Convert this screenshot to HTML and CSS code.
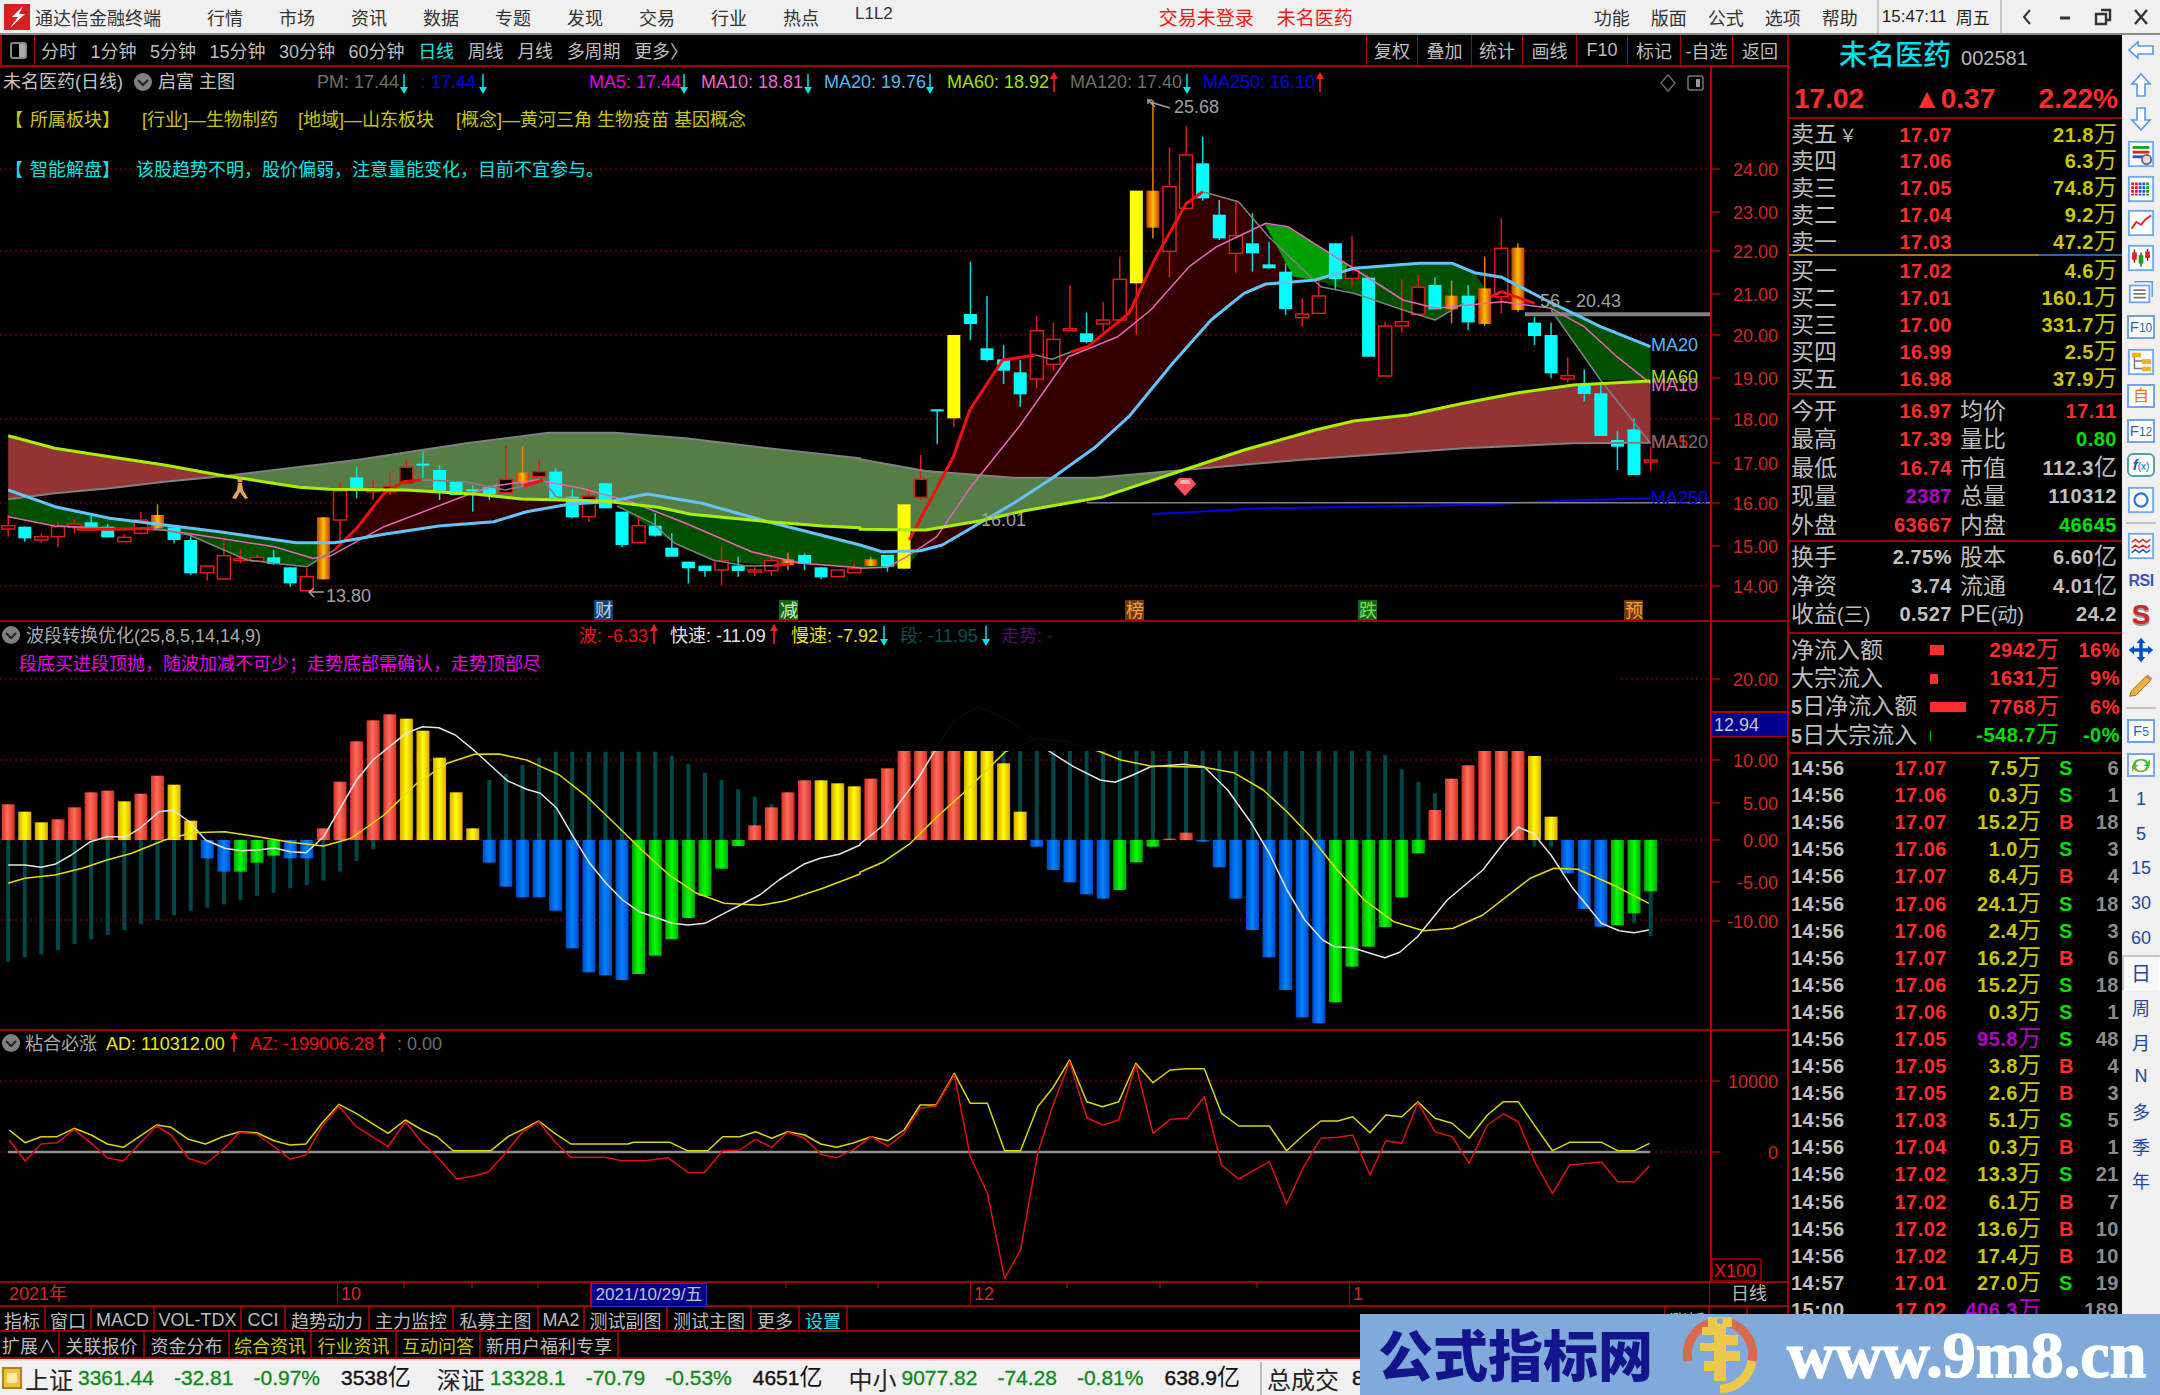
FILE: index.html
```html
<!DOCTYPE html>
<html lang="zh-CN">
<head>
<meta charset="utf-8">
<title>通达信金融终端</title>
<link rel="stylesheet" href="styles.css">
</head>
<body>
<div class="app">
  <header class="titlebar">
    <svg class="logo" viewBox="0 0 26 26"><rect width="26" height="26" fill="#d42020"/><path d="M19 2 L8 13 L14 13 L6 24 L21 10 L15 10 Z" fill="#fff"/></svg>
    <span class="brand">通达信金融终端</span>
    <nav class="menu"><span>行情</span><span>市场</span><span>资讯</span><span>数据</span><span>专题</span><span>发现</span><span>交易</span><span>行业</span><span>热点</span><span class="l12">L1L2</span></nav>
    <div class="notice"><span>交易未登录</span><span>未名医药</span></div>
    <nav class="menu2"><span>功能</span><span>版面</span><span>公式</span><span>选项</span><span>帮助</span></nav>
    <div class="clock"><span>15:47:11</span><span>周五</span></div>
    <div class="winbtns">
      <svg viewBox="0 0 20 20"><path d="M13 3 L7 10 L13 17" fill="none" stroke="#333" stroke-width="2"/></svg>
      <svg viewBox="0 0 20 20"><path d="M5 11 H15" stroke="#333" stroke-width="3"/></svg>
      <svg viewBox="0 0 20 20"><path d="M8 3 H17 V13 H14 M3 7 H13 V17 H3 Z" fill="none" stroke="#333" stroke-width="2.4"/></svg>
      <svg viewBox="0 0 20 20"><path d="M4 3 L16 17 M16 3 L4 17" stroke="#333" stroke-width="2.4"/></svg>
    </div>
  </header>

  <div class="work">
    <div class="left">
      <div class="toolbar">
        <span class="tb-icon"><i></i></span>
        <div class="periods"><span>分时</span><span>1分钟</span><span>5分钟</span><span>15分钟</span><span>30分钟</span><span>60分钟</span><span class="on">日线</span><span>周线</span><span>月线</span><span>多周期</span><span>更多〉</span></div>
        <div class="tb-right"><span>复权</span><span>叠加</span><span>统计</span><span>画线</span><span>F10</span><span>标记</span><span>-自选</span><span>返回</span></div>
      </div>

      <section class="panel">
        <svg class="chart main" viewBox="0 67 1787 553" xmlns="http://www.w3.org/2000/svg">
          <defs>
            <linearGradient id="gOrange"><stop offset="0" stop-color="#c83c00"/><stop offset=".5" stop-color="#ffc000"/><stop offset="1" stop-color="#c83c00"/></linearGradient>
            <linearGradient id="gRed"><stop offset="0" stop-color="#d83020"/><stop offset=".45" stop-color="#ff6e5e"/><stop offset="1" stop-color="#d83020"/></linearGradient>
            <linearGradient id="gYellow"><stop offset="0" stop-color="#dca800"/><stop offset=".5" stop-color="#ffff00"/><stop offset="1" stop-color="#dca800"/></linearGradient>
            <linearGradient id="gBlue"><stop offset="0" stop-color="#0048c8"/><stop offset=".5" stop-color="#0084ff"/><stop offset="1" stop-color="#0048c8"/></linearGradient>
            <linearGradient id="gGreen"><stop offset="0" stop-color="#00a800"/><stop offset=".5" stop-color="#00ff00"/><stop offset="1" stop-color="#00a800"/></linearGradient>
          </defs>
          <g id="mainGrid"></g>
          <g id="mainFill"></g>
          <g id="mainCandles"></g>
          <g id="mainLines"></g>
          <text class="t gray" x="3" y="88">未名医药(日线)</text>
          <circle class="hdot" cx="143" cy="82" r="9"/><path class="hchev" d="M138 80 L143 85 L148 80"/>
          <text class="t gray" x="158" y="88">启富 主图</text>
          <text class="n dim" x="317" y="88">PM: 17.44</text>
          <text class="n c-blue" x="421" y="88">: 17.44</text>
          <text class="n c-mag" x="589" y="88">MA5: 17.44</text>
          <text class="n c-pink" x="701" y="88">MA10: 18.81</text>
          <text class="n c-sky" x="824" y="88">MA20: 19.76</text>
          <text class="n c-lime" x="947" y="88">MA60: 18.92</text>
          <text class="n dim" x="1070" y="88">MA120: 17.40</text>
          <text class="n c-blue" x="1203" y="88">MA250: 16.10</text>
          <path class="diamond" d="M1668 75 L1675 83 L1668 91 L1661 83 Z"/>
          <rect class="mini" x="1688" y="76" width="15" height="14" rx="2"/><rect class="mini-in" x="1696" y="79" width="4" height="8"/>
          <text class="t c-olive" x="5" y="126">【<tspan dx="7">所属板块</tspan>】</text>
          <text class="t c-olive" x="142" y="126">[行业]—生物制药</text>
          <text class="t c-olive" x="298" y="126">[地域]—山东板块</text>
          <text class="t c-olive" x="456" y="126">[概念]—黄河三角 生物疫苗 基因概念</text>
          <text class="t c-cyan" x="5" y="176">【<tspan dx="7">智能解盘</tspan>】</text>
          <text class="t c-cyan" x="136" y="176">该股趋势不明，股价偏弱，注意量能变化，目前不宜参与。</text>
          <text class="n dim2" x="1174" y="113">25.68</text>
          <text class="n dim2" x="326" y="602">13.80</text>
          <path class="arrowm" d="M1155 107 L1148 100 L1148 104 M1148 100 L1152 100 M1150 102 L1170 108"/>
          <path class="arrowm" d="M324 592 H309 M314 588 L309 592 L314 597"/>
          <text class="n dim2" x="981" y="526">16.01</text>
          <text class="n dim2" x="1540" y="307">56 - 20.43</text>
          <text class="n c-sky" x="1651" y="351">MA20</text>
          <text class="n c-pink" x="1651" y="391">MA10</text>
          <text class="n c-lime" x="1651" y="383">MA60</text>
          <text class="n c-red" x="1651" y="448">MA5</text>
          <text class="n dim" x="1651" y="448">MA120</text>
          <text class="n c-blue" x="1651" y="504">MA250</text>
          <g id="mainMarks"></g>
          <g class="badge"><rect class="b-navy" x="594" y="600" width="19" height="21"/><text class="t b-navyt" x="595" y="617">财</text></g>
          <g class="badge"><rect class="b-green" x="779" y="600" width="19" height="21"/><text class="t b-greent" x="780" y="617">减</text></g>
          <g class="badge"><rect class="b-orange" x="1125" y="600" width="19" height="21"/><text class="t b-oranget" x="1126" y="617">榜</text></g>
          <g class="badge"><rect class="b-green" x="1358" y="600" width="19" height="21"/><text class="t b-greent2" x="1359" y="617">跌</text></g>
          <g class="badge"><rect class="b-orange" x="1624" y="600" width="19" height="21"/><text class="t b-oranget" x="1625" y="617">预</text></g>
          <g id="mainAxis"></g>
        </svg>
      </section>

      <section class="panel">
        <svg class="chart ind1" viewBox="0 622 1787 407" xmlns="http://www.w3.org/2000/svg">
          <g id="ind1Grid"></g>
          <g id="ind1Bars"></g>
          <g id="ind1Lines"></g>
          <rect class="mask" x="540" y="624" width="1081" height="127"/>
          <circle class="hdot" cx="11" cy="635" r="9"/><path class="hchev" d="M6 633 L11 638 L16 633"/>
          <text class="t gray2" x="26" y="642">波段转换优化(25,8,5,14,14,9)</text>
          <text class="t c-red" x="579" y="642">波: -6.33</text>
          <text class="t c-white" x="670" y="642">快速: -11.09</text>
          <text class="t c-yellow" x="791" y="642">慢速: -7.92</text>
          <text class="t c-teal" x="900" y="642">段: -11.95</text>
          <text class="t c-purple" x="1001" y="642">走势: -</text>
          <text class="t c-mag" x="19" y="670">段底买进段顶抛，随波加减不可少；走势底部需确认，走势顶部尽</text>
          <g id="ind1Axis"></g>
          <rect class="valbox" x="1712" y="713" width="75" height="23"/>
          <text class="n valtext" x="1714" y="731">12.94</text>
        </svg>
      </section>

      <section class="panel">
        <svg class="chart ind2" viewBox="0 1031 1787 250" xmlns="http://www.w3.org/2000/svg">
          <g id="ind2Grid"></g>
          <g id="ind2Lines"></g>
          <circle class="hdot" cx="11" cy="1043" r="9"/><path class="hchev" d="M6 1041 L11 1046 L16 1041"/>
          <text class="t gray2" x="25" y="1050">粘合必涨</text>
          <text class="n c-yellow" x="106" y="1050">AD: 110312.00</text>
          <text class="n c-red" x="250" y="1050">AZ: -199006.28</text>
          <text class="n dim" x="397" y="1050">: 0.00</text>
          <g id="ind2Axis"></g>
          <rect class="xbox" x="1712" y="1259" width="49" height="22"/>
          <text class="n c-red" x="1714" y="1277">X100</text>
        </svg>
      </section>

      <div class="datebar">
        <span>2021年</span><span>10</span><span class="cur">2021/10/29/五</span><span></span><span>12</span><span>1</span><span class="dl">日线</span>
        <svg class="dateticks" viewBox="0 0 1787 6"><path d="M404 0V5 M472 0V5 M538 0V5 M786 0V5 M878 0V5 M1067 0V5 M1160 0V5 M1257 0V5"/></svg>
      </div>
      <div class="tabs tabs-a"><span>指标</span><span>窗口</span><span>MACD</span><span>VOL-TDX</span><span>CCI</span><span>趋势动力</span><span>主力监控</span><span>私募主图</span><span>MA2</span><span>测试副图</span><span>测试主图</span><span>更多</span><span class="on">设置</span><span class="fill"></span><span>涨板</span><span>.</span></div>
      <div class="tabs tabs-b"><span>扩展∧</span><span>关联报价</span><span>资金分布</span><span class="hl">综合资讯</span><span class="hl">行业资讯</span><span class="hl">互动问答</span><span>新用户福利专享</span></div>
    </div>

    <aside class="quote">
      <div class="q-head">
        <div class="q-name"><b>未名医药</b><span>002581</span></div>
        <div class="q-price"><span>17.02</span><span>▲0.37</span><span>2.22%</span></div>
      </div>
      <div class="book sell">
        <div><span class="lab">卖五<small>￥</small></span><span class="pr">17.07</span><span class="vo">21.8<i>万</i></span></div>
        <div><span class="lab">卖四</span><span class="pr">17.06</span><span class="vo">6.3<i>万</i></span></div>
        <div><span class="lab">卖三</span><span class="pr">17.05</span><span class="vo">74.8<i>万</i></span></div>
        <div><span class="lab">卖二</span><span class="pr">17.04</span><span class="vo">9.2<i>万</i></span></div>
        <div><span class="lab">卖一</span><span class="pr">17.03</span><span class="vo">47.2<i>万</i></span></div>
      </div>
      <div class="book buy">
        <div><span class="lab">买一</span><span class="pr">17.02</span><span class="vo">4.6<i>万</i></span></div>
        <div><span class="lab">买二</span><span class="pr">17.01</span><span class="vo">160.1<i>万</i></span></div>
        <div><span class="lab">买三</span><span class="pr">17.00</span><span class="vo">331.7<i>万</i></span></div>
        <div><span class="lab">买四</span><span class="pr">16.99</span><span class="vo">2.5<i>万</i></span></div>
        <div><span class="lab">买五</span><span class="pr">16.98</span><span class="vo">37.9<i>万</i></span></div>
      </div>
      <div class="stats s5">
        <span class="lab">今开</span><span class="pr">16.97</span><span class="lab">均价</span><span class="pr">17.11</span>
        <span class="lab">最高</span><span class="pr">17.39</span><span class="lab">量比</span><span class="gr">0.80</span>
        <span class="lab">最低</span><span class="pr">16.74</span><span class="lab">市值</span><span class="wh">112.3<i>亿</i></span>
        <span class="lab">现量</span><span class="pu">2387</span><span class="lab">总量</span><span class="wh">110312</span>
        <span class="lab">外盘</span><span class="pr">63667</span><span class="lab">内盘</span><span class="gr">46645</span>
      </div>
      <div class="stats s3">
        <span class="lab">换手</span><span class="wh">2.75%</span><span class="lab">股本</span><span class="wh">6.60<i>亿</i></span>
        <span class="lab">净资</span><span class="wh">3.74</span><span class="lab">流通</span><span class="wh">4.01<i>亿</i></span>
        <span class="lab">收益<em>(三)</em></span><span class="wh">0.527</span><span class="lab">PE<em>(动)</em></span><span class="wh">24.2</span>
      </div>
      <div class="flow">
        <span class="lab">净流入额</span><span class="bar"><u class="b14"></u></span><span class="pr">2942<i>万</i></span><span class="pr">16%</span>
        <span class="lab">大宗流入</span><span class="bar"><u class="b8"></u></span><span class="pr">1631<i>万</i></span><span class="pr">9%</span>
        <span class="lab"><b>5</b>日净流入额</span><span class="bar"><u class="b36"></u></span><span class="pr">7768<i>万</i></span><span class="pr">6%</span>
        <span class="lab"><b>5</b>日大宗流入</span><span class="bar"><u class="bg"></u></span><span class="gr">-548.7<i>万</i></span><span class="gr">-0%</span>
      </div>
      <div class="ticks">
        <div><span>14:56</span><span>17.07</span><span>7.5<i>万</i></span><span class="s">S</span><span>6</span></div>
        <div><span>14:56</span><span>17.06</span><span>0.3<i>万</i></span><span class="s">S</span><span>1</span></div>
        <div><span>14:56</span><span>17.07</span><span>15.2<i>万</i></span><span class="b">B</span><span>18</span></div>
        <div><span>14:56</span><span>17.06</span><span>1.0<i>万</i></span><span class="s">S</span><span>3</span></div>
        <div><span>14:56</span><span>17.07</span><span>8.4<i>万</i></span><span class="b">B</span><span>4</span></div>
        <div><span>14:56</span><span>17.06</span><span>24.1<i>万</i></span><span class="s">S</span><span>18</span></div>
        <div><span>14:56</span><span>17.06</span><span>2.4<i>万</i></span><span class="s">S</span><span>3</span></div>
        <div><span>14:56</span><span>17.07</span><span>16.2<i>万</i></span><span class="b">B</span><span>6</span></div>
        <div><span>14:56</span><span>17.06</span><span>15.2<i>万</i></span><span class="s">S</span><span>18</span></div>
        <div><span>14:56</span><span>17.06</span><span>0.3<i>万</i></span><span class="s">S</span><span>1</span></div>
        <div><span>14:56</span><span>17.05</span><span class="big">95.8<i>万</i></span><span class="s">S</span><span>48</span></div>
        <div><span>14:56</span><span>17.05</span><span>3.8<i>万</i></span><span class="b">B</span><span>4</span></div>
        <div><span>14:56</span><span>17.05</span><span>2.6<i>万</i></span><span class="b">B</span><span>3</span></div>
        <div><span>14:56</span><span>17.03</span><span>5.1<i>万</i></span><span class="s">S</span><span>5</span></div>
        <div><span>14:56</span><span>17.04</span><span>0.3<i>万</i></span><span class="b">B</span><span>1</span></div>
        <div><span>14:56</span><span>17.02</span><span>13.3<i>万</i></span><span class="s">S</span><span>21</span></div>
        <div><span>14:56</span><span>17.02</span><span>6.1<i>万</i></span><span class="b">B</span><span>7</span></div>
        <div><span>14:56</span><span>17.02</span><span>13.6<i>万</i></span><span class="b">B</span><span>10</span></div>
        <div><span>14:56</span><span>17.02</span><span>17.4<i>万</i></span><span class="b">B</span><span>10</span></div>
        <div><span>14:57</span><span>17.01</span><span>27.0<i>万</i></span><span class="s">S</span><span>19</span></div>
        <div><span>15:00</span><span>17.02</span><span class="big">406.3<i>万</i></span><span></span><span>189</span></div>
      </div>
    </aside>

    <nav class="side">
      <span class="si first"><svg viewBox="0 0 30 24"><path class="ic" d="M3 12 L12 4 V8 H27 V16 H12 V20 Z"/></svg></span>
      <span class="si"><svg viewBox="0 0 30 28"><path class="ic" d="M15 3 L24 13 H19 V25 H11 V13 H6 Z"/></svg></span>
      <span class="si"><svg viewBox="0 0 30 28"><path class="ic" d="M15 25 L24 15 H19 V3 H11 V15 H6 Z"/></svg></span>
      <span class="si"><svg viewBox="0 0 30 30"><rect class="bx" x="2" y="2" width="26" height="26"/><path d="M6 8H24" stroke="#18a018" stroke-width="3"/><path d="M6 13H24" stroke="#e02020" stroke-width="3"/><path d="M6 18H18" stroke="#2050d0" stroke-width="3"/><circle cx="21" cy="21" r="5" fill="#ddd" stroke="#666" stroke-width="2"/></svg></span>
      <span class="si"><svg viewBox="0 0 30 30"><rect class="bx" x="2" y="2" width="26" height="26"/><path d="M6 8V22M10 8V22" stroke="#e02020" stroke-width="3" stroke-dasharray="3 1"/><path d="M14 8V22M18 8V22" stroke="#2050d0" stroke-width="3" stroke-dasharray="3 1"/><path d="M22 8V22" stroke="#18a018" stroke-width="3" stroke-dasharray="3 1"/></svg></span>
      <span class="si"><svg viewBox="0 0 30 30"><rect class="bx" x="2" y="2" width="26" height="26"/><path d="M5 21 L10 14 L15 17 L20 11 L26 7" fill="none" stroke="#e02020" stroke-width="2"/></svg></span>
      <span class="si"><svg viewBox="0 0 30 30"><rect class="bx" x="2" y="2" width="26" height="26"/><path d="M8 6V20M15 9V24M22 5V18" stroke="#333" stroke-width="1.5"/><path d="M8 9V17M22 8V15" stroke="#e02020" stroke-width="5"/><path d="M15 12V21" stroke="#18a018" stroke-width="5"/></svg></span>
      <span class="si"><svg viewBox="0 0 30 30"><path class="ic" d="M8 4H27V20"/><rect class="bx" x="3" y="8" width="21" height="18"/><path d="M7 13H20M7 17H20M7 21H20" stroke="#777" stroke-width="2"/></svg></span>
      <span class="si"><span class="ft">F<small>10</small></span></span>
      <span class="si"><svg viewBox="0 0 30 30"><rect class="bx" x="2" y="2" width="26" height="26"/><path d="M8 8V22H17M8 14H17" fill="none" stroke="#777" stroke-width="1.5"/><rect x="5" y="5" width="10" height="5" fill="#f0b020"/><rect x="16" y="12" width="10" height="5" fill="#f0b020"/><rect x="16" y="20" width="10" height="5" fill="#f0b020"/></svg></span>
      <span class="si"><span class="ft zi">自</span></span>
      <span class="si"><span class="ft">F<small>12</small></span></span>
      <span class="si"><span class="ft fx"><em>f</em><small>(x)</small></span></span>
      <span class="si"><svg viewBox="0 0 30 30"><rect class="bx" x="2" y="2" width="26" height="26"/><circle cx="15" cy="15" r="7" fill="none" stroke="#2f78d8" stroke-width="2.4"/></svg></span>
      <span class="sep"></span>
      <span class="si"><svg viewBox="0 0 30 30"><rect class="bx" x="2" y="2" width="26" height="26"/><path d="M5 11 L9 8 L13 11 L17 8 L21 11 L25 8" fill="none" stroke="#e02020" stroke-width="1.6"/><path d="M5 17 L9 14 L13 17 L17 14 L21 17 L25 14" fill="none" stroke="#e02020" stroke-width="1.6"/><path d="M5 22 L9 19 L13 22 L17 19 L21 22 L25 19" fill="none" stroke="#2050d0" stroke-width="1.6"/></svg></span>
      <span class="si"><span class="rsi">RSI</span></span>
      <span class="si"><span class="dol">S</span></span>
      <span class="si"><svg viewBox="0 0 32 32"><path d="M16 2 L21 8 H18 V14 H24 V11 L30 16 L24 21 V18 H18 V24 H21 L16 30 L11 24 H14 V18 H8 V21 L2 16 L8 11 V14 H14 V8 H11 Z" fill="#0050c8"/></svg></span>
      <span class="si"><svg viewBox="0 0 32 32"><path d="M5 24 L22 7 L27 12 L10 29 L3 30 Z" fill="#f0b040" stroke="#806020"/><path d="M22 7 L24 5 L29 10 L27 12 Z" fill="#e08080"/></svg></span>
      <span class="sep"></span>
      <span class="si"><span class="ft">F<small>5</small></span></span>
      <span class="si"><svg viewBox="0 0 30 26"><rect class="bx" x="2" y="2" width="26" height="22"/><path d="M7 13 A8 6 0 0 1 22 10 L24 7 V14 H17 L20 12 A5 4 0 0 0 10 13 Z" fill="#40c040"/><path d="M23 14 A8 6 0 0 1 8 17 L6 20 V13 H13 L10 15 A5 4 0 0 0 20 14 Z" fill="#70b040"/></svg></span>
      <span class="si tx">1</span><span class="si tx">5</span><span class="si tx">15</span><span class="si tx">30</span><span class="si tx">60</span>
      <span class="si tx sel">日</span><span class="si tx">周</span><span class="si tx">月</span><span class="si tx">N</span><span class="si tx">多</span><span class="si tx">季</span><span class="si tx">年</span>
    </nav>
  </div>

  <footer class="status">
    <span class="st-icon"><i></i></span>
    <span class="st-l">上证</span><span class="st-n lead">3361.44</span><span class="st-n">-32.81</span><span class="st-n">-0.97%</span><span class="st-a">3538<i>亿</i></span>
    <span class="st-l wide">深证</span><span class="st-n lead">13328.1</span><span class="st-n">-70.79</span><span class="st-n">-0.53%</span><span class="st-a">4651<i>亿</i></span>
    <span class="st-l wide">中小</span><span class="st-n lead">9077.82</span><span class="st-n">-74.28</span><span class="st-n">-0.81%</span><span class="st-a">638.9<i>亿</i></span>
    <span class="st-sep"></span><span class="st-l tight">总成交</span><span class="st-a near">8</span>
  </footer>

  <div class="watermark">
    <span class="wm-cn">公式指标网</span>
    <svg class="wm-logo" viewBox="0 0 80 80"><path d="M8 46 A33 33 0 0 1 30 8" fill="none" stroke="#d9694f" stroke-width="9"/><path d="M50 8 A33 33 0 0 1 72 46" fill="none" stroke="#d9694f" stroke-width="9"/><path d="M72 46 A33 33 0 0 1 40 74" fill="none" stroke="#ecc94b" stroke-width="9"/><path d="M28 2 H52 V12 H46 V20 H58 V30 H46 V36 H60 V46 H46 V66 H34 V56 H24 V46 H34 V36 H20 V28 H34 V20 H22 V12 H28 Z" fill="#ecc94b"/><circle cx="40" cy="6" r="3" fill="#7fa9d8"/></svg>
    <span class="wm-url">www.9m8.cn</span>
  </div>
</div>
<script src="chart.js"></script>
</body>
</html>
```

FILE: styles.css
```css
* { box-sizing: border-box; }
html, body { margin: 0; padding: 0; background: #000; }
body { font-family: "Liberation Sans", "Noto Sans CJK SC", sans-serif; }
.app { width: 2160px; height: 1395px; position: relative; overflow: hidden; display: flex; flex-direction: column; }

/* title bar */
.titlebar { height: 35px; flex: none; background: #f0f0f0; border-bottom: 2px solid #8c8c8c; display: flex; align-items: center; font-size: 18px; color: #222; white-space: nowrap; }
.logo { width: 26px; height: 26px; margin-left: 4px; flex: none; }
.brand { margin-left: 5px; width: 126px; flex: none; letter-spacing: 0; color: #333; }
.menu { display: flex; gap: 36px; margin-left: 46px; color: #333; }
.l12 { font-size: 17px; }
.notice { display: flex; gap: 23px; margin-left: 266px; color: #f01818; font-size: 19px; width: 330px; }
.menu2 { display: flex; gap: 21px; margin-left: 105px; color: #333; }
.clock { display: flex; gap: 9px; margin-left: 19px; height: 33px; align-items: center; width: 125px; flex: none; border-left: 2px solid #c8c8c8; border-right: 2px solid #c8c8c8; padding: 0 3px; font-size: 17px; }
.winbtns { display: flex; gap: 18px; margin-left: 15px; }
.winbtns svg { width: 20px; height: 20px; display: block; }

/* layout */
.work { height: 1324px; flex: none; display: flex; }
.left { width: 1787px; flex: none; display: flex; flex-direction: column; background: #000; }

/* toolbar */
.toolbar { height: 32px; flex: none; border-bottom: 2px solid #a80000; display: flex; align-items: center; color: #bdbdbd; font-size: 18px; }
.tb-icon { width: 35px; height: 30px; flex: none; border-right: 1px solid #a80000; border-left: 2px solid #a80000; display: flex; align-items: center; justify-content: center; }
.tb-icon i { width: 17px; height: 17px; border: 2px solid #888; border-radius: 3px; display: block; background: linear-gradient(90deg, #000 55%, #aaa 55%); }
.periods { display: flex; gap: 13.5px; margin-left: 6px; }
.periods .on { color: #22e0e0; }
.tb-right { margin-left: auto; display: grid; grid-template-columns: 51px 54px 51px 54px 51px 53px 52px 55px; height: 30px; }
.tb-right span { border-left: 1px solid #a80000; display: flex; align-items: center; justify-content: center; }

/* chart panels */
.panel { flex: none; border-bottom: 2px solid #a00000; background: #000; }
.chart { display: block; width: 1787px; font-size: 18px; }
.chart.main { height: 553px; }
.chart.ind1 { height: 407px; }
.chart.ind2 { height: 250px; }
.t, .n { font-family: "Liberation Sans", "Noto Sans CJK SC", sans-serif; font-size: 18px; }
.gray { fill: #c4c4c4; }
.gray2 { fill: #a8a8a8; }
.dim { fill: #707070; }
.dim2 { fill: #a0a0a0; }
.c-blue { fill: #0000e8; }
.c-mag { fill: #e800e8; }
.c-pink { fill: #ee66cc; }
.c-sky { fill: #55b8f5; }
.c-lime { fill: #a0e000; }
.c-olive { fill: #c8c800; }
.c-cyan { fill: #00e8e8; }
.c-red { fill: #ee1010; }
.c-white { fill: #e0e0e0; }
.c-yellow { fill: #e8e800; }
.c-teal { fill: #0a5050; }
.c-purple { fill: #4a1060; }
.axis-t { fill: #d02828; font-family: "Liberation Sans", sans-serif; font-size: 18px; text-anchor: end; }
.hdot { fill: #808080; }
.hchev { fill: none; stroke: #222; stroke-width: 2; }
.diamond { fill: none; stroke: #666; stroke-width: 1.5; }
.mini { fill: #000; stroke: #777; stroke-width: 1.5; }
.mini-in { fill: #999; }
.arrowm { fill: none; stroke: #a0a0a0; stroke-width: 1.5; }
.grid { stroke: #a80000; stroke-width: 1; stroke-dasharray: 2 3; fill: none; }
.tickm { stroke: #a80000; stroke-width: 1.5; fill: none; }
.axisv { stroke: #b00000; stroke-width: 2; fill: none; }
.mask { fill: #000; opacity: .97; }
.valbox { fill: #000090; }
.valtext { fill: #c8c8c8; }
.xbox { fill: none; stroke: #a00000; stroke-width: 1.5; }
.b-navy { fill: #1d3f6e; } .b-navyt { fill: #b8d4f0; }
.b-green { fill: #146614; } .b-greent { fill: #d8f0c0; } .b-greent2 { fill: #7de060; }
.b-orange { fill: #6a3a10; } .b-oranget { fill: #ffa040; }

/* main chart shapes */
.f-ma-red { fill: #933333; }
.f-ma-green { fill: #567d46; }
.f-dred { fill: #330000; }
.f-dgreen { fill: #005000; }
.f-bgreen { fill: #00a000; }
.f-mred { fill: #660000; }
.wick { stroke-width: 1.5; fill: none; }
.wick.c { stroke: #00e0e0; }
.wick.r { stroke: #e81818; }
.wick.o { stroke: #e88000; }
.wick.y { stroke: #e81818; }
.body.c { fill: #00ffff; }
.body.r { fill: #000; stroke: #e81818; stroke-width: 1.5; }
.body.o { fill: url(#gOrange); }
.body.y { fill: #ffff00; }
.l { fill: none; stroke-linejoin: round; }
.l-60 { stroke: #a8f000; stroke-width: 3; }
.l-120 { stroke: #808080; stroke-width: 2; }
.l-20 { stroke: #62c4fa; stroke-width: 3; }
.l-10 { stroke: #e866b8; stroke-width: 1.5; }
.l-5r { stroke: #f01010; stroke-width: 3; }
.l-5g { stroke: #808080; stroke-width: 1.5; }
.l-250 { stroke: #0000f0; stroke-width: 2; }
.l-flat { stroke: #808080; stroke-width: 1.5; }
.l-res { stroke: #808080; stroke-width: 4; }
.l-white { stroke: #e4e4e4; stroke-width: 1.5; }
.l-yellow { stroke: #e0e000; stroke-width: 1.5; }
.l-ad { stroke: #d8d800; stroke-width: 1.5; }
.l-az { stroke: #e01010; stroke-width: 1.5; }
.l-zero { stroke: #909090; stroke-width: 2.5; }
.arr { fill: none; stroke-width: 1.5; }
.arr.cy { stroke: #00e8e8; }
.arr.rd { stroke: #ff2020; }
.arrh.cy { fill: #00e8e8; }
.arrh.rd { fill: #ff2020; }
.mk-body { fill: #e8a060; }
.mk-gem { fill: #ff5060; }
.mk-gem2 { fill: #ffb0b0; }
.teal { fill: #004848; }
.hb-r { fill: url(#gRed); }
.hb-y { fill: url(#gYellow); }
.hb-b { fill: url(#gBlue); }
.hb-g { fill: url(#gGreen); }

/* date bar + tabs */
.datebar { height: 24px; flex: none; border-bottom: 2px solid #a00000; position: relative; display: grid; grid-template-columns: 338px 253px 116px 264px 379px 360px 77px; color: #d02828; font-size: 18px; line-height: 22px; }
.datebar span { border-right: 1px solid #a00000; padding-left: 3px; white-space: nowrap; }
.datebar span:first-child { padding-left: 9px; }
.datebar .cur { background: #000090; color: #c4c4c4; padding: 0; border: 1px solid #3030b0; text-align: center; font-size: 17px; }
.datebar .dl { color: #bbb; border: 0; padding-left: 21px; }
.dateticks { position: absolute; left: 0; top: 0; width: 1787px; height: 6px; }
.dateticks path { stroke: #a00000; stroke-width: 1.5; fill: none; }
.tabs { flex: none; display: grid; border-bottom: 2px solid #a00000; color: #bdbdbd; font-size: 18px; }
.tabs span { border-right: 2px solid #8c0000; display: flex; align-items: center; justify-content: center; white-space: nowrap; }
.tabs-a { height: 25px; grid-template-columns: 46px 46px 63px 87px 44px 84px 84px 85px 46px 83px 84px 48px 48px 818px 44px 38px; }
.tabs-a .fill { border-right: 2px solid #8c0000; }
.tabs-a .on { color: #20e0e0; }
.tabs-b { height: 27px; grid-template-columns: 60px 85px 85px 82px 85px 84px 138px; }
.tabs-b .hl { color: #c8c800; }

/* quote */
.quote { width: 335px; flex: none; background: #000; border-left: 2px solid #a00000; overflow: hidden; color: #c0c0c0; line-height: 27px; font-family: "Liberation Sans", "Noto Sans CJK SC", sans-serif; }
.q-head { height: 84px; border-bottom: 2px solid #a00000; }
.q-name { height: 41px; display: flex; align-items: center; padding-left: 50px; gap: 10px; }
.q-name b { font-size: 28px; font-weight: 500; color: #00dff0; line-height: 40px; }
.q-name span { font-size: 20px; color: #b8b8b8; margin-top: 6px; }
.q-price { height: 41px; display: grid; grid-template-columns: 119px 123px 1fr; padding: 3px 4px 0 5px; font-weight: 700; font-size: 28px; color: #ff2c2c; align-items: center; }
.q-price span:last-child { text-align: right; }
.lab { font-size: 23px; color: #bdbdbd; white-space: nowrap; line-height: 27px; }
.lab small { font-size: 18px; margin-left: 2px; }
.lab em { font-style: normal; font-size: 20px; }
.lab b { font-size: 20px; }
.pr, .vo, .gr, .wh, .pu, .ticks span { font-size: 20px; font-weight: 700; letter-spacing: .5px; text-align: right; white-space: nowrap; line-height: 27px; }
i { font-style: normal; font-weight: 400; font-size: 23px; letter-spacing: 0; line-height: 1; }
.pr { color: #ff2c2c; }
.vo { color: #c8c800; }
.gr { color: #00e000; }
.wh { color: #c0c0c0; }
.pu { color: #b000c8; }
.book > div { display: grid; grid-template-columns: 60px 101px 165px; height: 27px; align-items: center; padding-left: 2px; }
.book .lab { white-space: nowrap; }
.sell { padding-top: 2px; height: 137px; border-bottom: 2px solid; border-image: linear-gradient(90deg, #a87820 0 75%, #2868a0 75%) 1; }
.buy { padding-top: 2px; height: 139px; border-bottom: 2px solid #a00000; }
.stats { display: grid; grid-template-columns: 60px 101px 68px 97px; grid-auto-rows: 28.5px; align-items: center; padding-left: 2px; padding-top: 2px; border-bottom: 2px solid #a00000; }
.stats > :nth-child(4n+3) { padding-left: 8px; }
.s5 { height: 146.5px; }
.s3 { height: 92.5px; }
.flow { height: 120px; display: grid; grid-template-columns: 139px 46px 83px 61px; grid-auto-rows: 28.5px; align-items: center; padding-left: 2px; padding-top: 2px; border-bottom: 2px solid #a00000; }
.bar { display: flex; align-items: center; height: 100%; }
.bar u { display: block; background: #ff2c2c; height: 10px; }
.bar .b14 { width: 14px; }
.bar .b8 { width: 8px; }
.bar .b36 { width: 36px; }
.bar .bg { width: 1px; background: #00c000; }
.ticks { padding-top: 1px; }
.ticks > div { display: grid; grid-template-columns: 70px 86px 94px 32px 46px; height: 27.1px; align-items: center; padding-left: 2px; }
.ticks span:nth-child(1) { text-align: left; color: #c0c0c0; }
.ticks span:nth-child(2) { color: #ff2c2c; }
.ticks span:nth-child(3) { color: #c8c800; }
.ticks span.big { color: #b000c8; }
.ticks span:nth-child(4) { padding-left: 18px; text-align: left; }
.ticks span:nth-child(5) { color: #8c8c8c; }
.ticks .s { color: #00e000; }
.ticks .b { color: #ff2c2c; }

/* side tools */
.side { flex: 1; background: #f0f0f0; display: flex; flex-direction: column; align-items: center; color: #1f4796; }
.si { height: 34.6px; width: 100%; flex: none; display: flex; align-items: center; justify-content: center; }
.si.first { margin-top: -2px; }
.si svg { width: 30px; height: 28px; display: block; }
.ic { fill: #fff; stroke: #5a96ea; stroke-width: 1.6; }
.bx { fill: #fff; stroke: #74a8f0; stroke-width: 2; }
.sep { height: 11.5px; width: 30px; flex: none; position: relative; }
.sep::after { content: ""; display: block; height: 2px; background: #c4c4c4; margin-top: 5px; }
.ft { width: 28px; height: 24px; border: 2px solid #6ea2ee; background: #fff; color: #2a66c8; font-size: 15px; line-height: 20px; text-align: center; display: block; white-space: nowrap; }
.ft small { font-size: 12px; }
.ft.zi { color: #f07010; font-size: 16px; }
.ft.fx { border-color: #50a0a0; border-radius: 6px; color: #205aa0; }
.ft.fx em { font-weight: 700; }
.ft.fx small { font-size: 10px; }
.rsi { font-size: 16px; font-weight: 700; color: #3c50b4; letter-spacing: -.5px; }
.dol { font-size: 28px; font-weight: 700; color: #d02828; text-shadow: 0 2px 0 #999; line-height: 28px; }
.tx { font-size: 18px; color: #1f4796; }
.sel { background: #f8f8f8; box-shadow: inset 2px 2px 0 #c8c8c8, inset -1px -1px 0 #fff; font-size: 20px; }

/* status */
.status { height: 36px; flex: none; background: #f0f0f0; border-top: 2px solid #dcdcdc; display: flex; align-items: center; font-size: 21px; color: #111; white-space: nowrap; }
.st-icon { width: 20px; height: 22px; margin-left: 2px; background: #f4c040; border: 2px solid #b08020; display: flex; align-items: center; justify-content: center; flex: none; }
.st-icon i { width: 10px; height: 10px; background: #ffe9a8; display: block; }
.st-l { font-size: 24px; color: #222; margin-left: 3px; }
.st-l.wide { margin-left: 26px; }
.st-l.tight { margin-left: 5px; }
.st-n { color: #0a8a14; margin-left: 20px; -webkit-text-stroke: .3px #0a8a14; }
.st-n.lead { margin-left: 5px; }
.st-a { margin-left: 21px; color: #111; -webkit-text-stroke: .4px #111; }
.st-a.near { margin-left: 13px; }
.st-a i { font-size: 23px; -webkit-text-stroke: 0; }
.st-sep { width: 2px; height: 33px; background: #bbb; margin-left: 20px; }

/* watermark */
.watermark { position: absolute; left: 1360px; top: 1314px; width: 800px; height: 81px; background: #80aad9; display: flex; align-items: center; }
.wm-cn { font-family: "Noto Sans CJK SC", sans-serif; font-weight: 900; font-size: 55px; line-height: 60px; color: #14148c; margin: -5px 0 0 18px; white-space: nowrap; }
.wm-logo { width: 80px; height: 80px; flex: none; margin-left: 27px; display: block; }
.wm-url { font-family: "Liberation Serif", serif; font-weight: 700; font-size: 66px; line-height: 70px; color: #fff; -webkit-text-stroke: 1.5px #fff; margin-left: 27px; white-space: nowrap; }
```

FILE: chart.js
```js
(function () {
  var NS = 'http://www.w3.org/2000/svg';
  function $(id) { return document.getElementById(id); }
  function el(p, tag, a, txt) {
    var e = document.createElementNS(NS, tag);
    for (var k in a) e.setAttribute(k, a[k]);
    if (txt != null) e.textContent = txt;
    p.appendChild(e);
    return e;
  }
  function X(i) { return 8.2 + 16.59 * i; }
  // Coordinate spaces of the measured crops
  var z7 = function (p) { return [p[0] / 1.823, 400 + p[1] / 3]; };
  var z8 = function (p) { return [860 + p[0] / 1.823, 90 + p[1] / 3]; };
  var z9 = function (p) { return [p[0] / 1.823, 620 + p[1] / 3]; };
  var z10 = function (p) { return [860 + p[0] / 1.686, 620 + p[1] / 3]; };
  var z11 = function (p) { return [p[0] / 0.876, 1020 + p[1] / 3]; };
  function str(list, m) {
    return list.map(function (p) { var q = m(p); return q[0].toFixed(1) + ',' + q[1].toFixed(1); }).join(' ');
  }
  function line(g, cls, a, ma, b, mb) {
    var s = str(a, ma);
    if (b) s += ' ' + str(b, mb);
    el(g, 'polyline', { points: s, 'class': 'l ' + cls });
  }
  function poly(g, cls, a, m) { el(g, 'polygon', { points: str(a, m), 'class': cls }); }

  function axis(g, top, bottom, labels) {
    el(g, 'path', { d: 'M1711 ' + top + ' V' + bottom, 'class': 'axisv' });
    labels.forEach(function (l) {
      el(g, 'path', { d: 'M1711 ' + l[1] + ' H1720', 'class': 'tickm' });
      el(g, 'text', { x: 1778, y: l[1] + 6.5, 'class': 'axis-t' }, l[0]);
    });
  }

  /* ---------- main chart ---------- */
  var gy = [169, 251, 335, 419, 503, 586];
  gy.forEach(function (y) { el($('mainGrid'), 'path', { d: 'M0 ' + y + ' H1711', 'class': 'grid' }); });

  var ma60a = [[15,107],[100,145],[200,170],[300,195],[410,228],[450,237],[545,262],[600,268],[740,270],[870,283],[950,297],[1100,303],[1200,322],[1260,343],[1400,365],[1500,378],[1568,383]];
  var ma60b = [[0,1318],[120,1320],[220,1292],[300,1262],[440,1222],[590,1140],[700,1080],[830,1020],[900,993],[1000,975],[1100,940],[1200,908],[1300,885],[1441,873]];
  var ma120a = [[15,298],[100,280],[200,265],[300,245],[410,228],[500,210],[650,180],[850,130],[1000,98],[1120,98],[1250,115],[1400,145],[1568,175]];
  var ma120b = [[0,1108],[120,1143],[280,1163],[430,1163],[590,1140],[800,1110],[1100,1075],[1300,1060],[1441,1058]];
  var ma20a = [[15,270],[100,320],[200,355],[300,375],[400,395],[540,428],[610,428],[700,403],[800,378],[900,365],[960,335],[1040,312],[1110,305],[1180,282],[1280,310],[1400,365],[1568,435]];
  var ma20b = [[0,1365],[40,1385],[110,1382],[150,1365],[280,1240],[350,1165],[430,1070],[490,980],[570,820],[640,690],[700,610],[740,582],[830,570],[900,535],[1020,520],[1080,520],[1120,548],[1170,562],[1250,630],[1350,710],[1441,770]];
  var ma10a = [[15,350],[100,378],[200,385],[300,390],[400,415],[500,440],[570,475],[600,470],[700,380],[860,280],[900,258],[980,240],[1060,265],[1150,305],[1250,370],[1370,455],[1460,490],[1568,503]];
  var ma10b = [[0,1435],[50,1432],[90,1395],[140,1340],[200,1195],[290,1010],[380,800],[470,740],[530,660],[600,530],[650,470],[740,400],[780,410],[890,525],[990,630],[1050,655],[1170,635],[1260,655],[1320,710],[1380,800],[1441,880]];

  var F = $('mainFill');
  poly(F, 'f-dred', [[590,478],[650,385],[700,280],[768,240],[850,245],[920,270],[990,240],[1060,300],[1040,312],[960,335],[880,365],[800,378],[700,403],[620,428]], z7);
  poly(F, 'f-dgreen', [[15,270],[100,320],[200,355],[300,375],[400,395],[540,428],[590,430],[590,478],[560,500],[450,480],[345,405],[280,385],[140,388],[15,350]], z7);
  poly(F, 'f-dgreen', [[1125,318],[1180,282],[1280,310],[1400,365],[1568,435],[1568,503],[1460,490],[1410,497],[1300,480],[1230,430]], z7);
  poly(F, 'f-dgreen', [[0,1365],[40,1385],[110,1382],[90,1420],[50,1432],[0,1435]], z8);
  poly(F, 'f-dred', [[90,1380],[170,1100],[200,960],[260,810],[320,795],[350,808],[385,785],[415,770],[490,670],[540,500],[595,340],[625,305],[690,335],[745,440],[840,590],[830,570],[700,610],[640,690],[570,820],[490,980],[430,1070],[350,1165],[280,1240],[150,1365],[110,1382]], z8);
  poly(F, 'f-bgreen', [[738,403],[780,410],[890,525],[885,540],[830,570],[790,560]], z8);
  poly(F, 'f-dgreen', [[835,572],[890,535],[1020,520],[1080,520],[1120,548],[1150,620],[1100,640],[1048,690],[1000,665],[900,610]], z8);
  poly(F, 'f-mred', [[1150,620],[1170,605],[1230,640],[1190,645]], z8);
  poly(F, 'f-dgreen', [[1250,630],[1350,710],[1441,770],[1441,873],[1350,870],[1260,660]], z8);
  var r1 = ma60a.slice(0, 5).concat([[300,245],[200,265],[100,280],[15,298]]);
  poly(F, 'f-ma-red', r1, z7);
  var g1 = [[410,228],[500,210],[650,180],[850,130],[1000,98],[1120,98],[1250,115],[1400,145],[1568,175],[1568,383],[1500,378],[1400,365],[1260,343],[1200,322],[1100,303],[950,297],[870,283],[740,270],[600,268],[545,262],[450,237]];
  poly(F, 'f-ma-green', g1, z7);
  poly(F, 'f-ma-green', [[0,1108],[120,1143],[280,1163],[430,1163],[590,1140],[440,1222],[300,1262],[220,1292],[120,1320],[0,1318]], z8);
  poly(F, 'f-ma-red', [[590,1140],[700,1080],[830,1020],[900,993],[1000,975],[1100,940],[1200,908],[1300,885],[1441,873],[1441,1058],[1300,1060],[1100,1075],[800,1110]], z8);

  // candle: index, type, wickTop, bodyTop, bodyBottom, wickBottom
  var c7 = [
    [0,'r',345,377,387,410],[1,'c',380,380,415,425],[2,'r',400,410,420,428],[3,'r',365,380,410,442],
    [4,'r',358,372,382,400],[5,'c',345,367,382,382],[6,'c',372,380,412,412],[7,'r',403,412,425,425],
    [8,'r',335,360,400,400],[9,'o',313,345,385,385],[10,'c',375,382,420,430],[11,'c',405,420,520,525],
    [12,'r',498,498,518,542],[13,'r',420,467,537,537],[14,'r',448,476,482,490],[15,'r',465,472,484,484],
    [16,'c',450,472,492,495],[17,'c',502,502,550,560],[18,'r',505,530,572,575],[19,'o',352,352,538,538],
    [20,'r',245,272,360,420],[21,'c',200,232,265,295],[22,'r',240,265,275,300],[23,'r',218,260,275,285],
    [24,'r',178,202,250,250],[25,'c',155,191,194,235],[26,'c',195,210,272,300],[27,'c',245,245,285,285],
    [28,'c',255,268,272,335],[29,'c',255,262,282,300],[30,'r',135,238,278,278],[31,'o',140,218,250,260],
    [32,'r',178,215,230,230],[33,'c',205,215,295,300],[34,'c',268,290,352,355],[35,'r',265,288,350,365],
    [36,'c',250,250,325,325],[37,'c',335,335,435,442],[38,'r',350,377,428,428],[39,'c',340,377,407,410],
    [40,'c',400,443,470,470],[41,'c',485,485,505,550],[42,'c',497,497,513,530],[43,'r',438,482,510,555],
    [44,'c',470,497,513,530],[45,'r',500,510,514,528],[46,'r',465,482,512,528],[47,'o',458,478,495,510],
    [48,'c',460,465,492,510],[49,'c',502,502,532,538],[50,'r',510,510,530,530],[51,'r',490,505,518,518]
  ];
  var c8 = [
    [52,'o',1400,1408,1428,1428],[53,'c',1395,1395,1430,1445],[54,'y',1243,1243,1436,1436],[55,'r',1095,1168,1222,1232],
    [56,'c',958,958,963,1062],[57,'y',735,735,985,1012],[58,'c',515,672,702,750],[59,'c',618,775,810,815],
    [60,'c',765,808,842,882],[61,'c',810,847,913,950],[62,'r',678,722,867,895],[63,'r',698,748,823,842],
    [64,'r',585,716,720,720],[65,'c',668,730,756,760],[66,'r',635,690,702,725],[67,'r',500,568,690,690],
    [68,'y',302,302,580,735],[69,'o',30,302,413,445],[70,'r',172,290,484,562],[71,'r',108,195,355,355],
    [72,'c',140,220,325,332],[73,'c',330,374,445,450],[74,'r',330,437,490,548],[75,'c',370,460,490,545],
    [76,'c',455,523,535,535],[77,'c',520,545,657,675],[78,'r',625,672,683,710],[79,'r',570,618,670,670],
    [80,'c',460,460,567,598],[81,'r',437,540,565,590],[82,'c',563,563,800,800],[83,'r',695,708,858,858],
    [84,'r',568,695,708,728],[85,'r',555,592,673,673],[86,'c',562,585,658,658],[87,'o',572,617,658,700],
    [88,'c',585,617,697,720],[89,'o',500,595,702,708],[90,'r',385,475,620,670],[91,'o',460,473,660,665],
    [92,'c',680,698,738,765],[93,'c',698,735,850,865],[94,'r',802,857,867,878],[95,'c',838,885,912,935],
    [96,'c',880,910,1038,1038],[97,'c',1022,1050,1070,1140],[98,'c',985,1018,1155,1155],[99,'r',1070,1110,1114,1142]
  ];
  var C = $('mainCandles');
  function candle(d, yf) {
    var x = X(d[0]), t = d[1];
    el(C, 'path', { d: 'M' + x + ' ' + yf(d[2]) + ' V' + yf(d[5]), 'class': 'wick ' + t });
    el(C, 'rect', { x: x - 6.5, y: yf(d[3]), width: 13, height: Math.max(2, yf(d[4]) - yf(d[3])), 'class': 'body ' + t });
  }
  c7.forEach(function (d) { candle(d, function (v) { return 400 + v / 3; }); });
  c8.forEach(function (d) { candle(d, function (v) { return 90 + v / 3; }); });

  var L = $('mainLines');
  line(L, 'l-120', ma120a, z7, ma120b, z8);
  line(L, 'l-250', [[533,1272],[580,1268],[730,1255],[1030,1247],[1160,1242],[1280,1232],[1441,1225]], z8);
  el(L, 'path', { d: 'M1087 502.7 H1711', 'class': 'l l-flat' });
  el(L, 'path', { d: 'M1525 314.3 H1711', 'class': 'l l-res' });
  line(L, 'l-10', ma10a, z7, ma10b, z8);
  // MA5: thin grey while falling, heavy red while rising
  [[[280,385],[345,405],[380,430],[450,480],[500,490],[560,500],[580,478],[610,450]],
   [[768,240],[850,245],[920,270],[955,258]],
   [[990,240],[1014,290],[1060,300]],
   [[1125,318],[1190,370],[1230,430],[1300,480],[1360,498],[1410,497]]].forEach(function (s) { line(L, 'l-5g', s, z7); });
  [[[625,305],[690,335],[745,440],[840,590],[900,610],[1000,665],[1048,690],[1100,640]],
   [[1260,660],[1350,870],[1441,1060]],
   [[320,795],[350,808],[385,785]]].forEach(function (s) { line(L, 'l-5g', s, z8); });
  [[[140,388],[210,388],[280,385]],
   [[610,450],[650,385],[700,280],[735,245],[768,240]],
   [[955,258],[990,240]],
   [[1410,497],[1440,492]]].forEach(function (s) { line(L, 'l-5r', s, z7); });
  [[[90,1350],[170,1100],[200,960],[260,810],[320,795]],
   [[385,785],[415,770],[490,670],[540,500],[595,340],[625,305]],
   [[1150,620],[1170,605],[1230,640]]].forEach(function (s) { line(L, 'l-5r', s, z8); });
  line(L, 'l-20', ma20a, z7, ma20b, z8);
  line(L, 'l-60', ma60a, z7, ma60b, z8);

  // legend arrows
  function arrow(g, x, y, up) {
    var c = up ? 'rd' : 'cy';
    el(g, 'path', { d: 'M' + x + ' ' + (y - 9) + ' V' + (y + 9), 'class': 'arr ' + c });
    var h = up ? [[x, y - 11], [x - 4, y - 4], [x + 4, y - 4]] : [[x, y + 11], [x - 4, y + 4], [x + 4, y + 4]];
    el(g, 'polygon', { points: h.join(' '), 'class': 'arrh ' + c });
  }
  var M = $('mainMarks');
  [[404,0],[483,0],[684,0],[808,0],[930,0],[1054,1],[1187,0],[1320,1]].forEach(function (a) { arrow(M, a[0], 83, a[1]); });
  // running-figure buy marker and sell gem
  el(M, 'circle', { cx: 240, cy: 480, r: 2.5, 'class': 'mk-body' });
  el(M, 'polygon', { points: '238,483 242,483 243,490 248,498 245,499 240,492 236,499 232,498 237,490', 'class': 'mk-body' });
  el(M, 'polygon', { points: '1179,478 1191,478 1196,484 1185,496 1174,484', 'class': 'mk-gem' });
  el(M, 'polygon', { points: '1181,480 1189,480 1191,484 1179,484', 'class': 'mk-gem2' });

  axis($('mainAxis'), 67, 620, [['24.00',169],['23.00',212],['22.00',251],['21.00',294],['20.00',335],['19.00',378],['18.00',419],['17.00',463],['16.00',503],['15.00',546],['14.00',586]]);

  /* ---------- wave indicator ---------- */
  [[0,760,1711],[0,920,1711],[0,840,1711],[0,679,540],[1621,679,1711]].forEach(function (g) {
    el($('ind1Grid'), 'path', { d: 'M' + g[0] + ' ' + g[1] + ' H' + g[2], 'class': 'grid' });
  });
  var teal = [1025,1012,1003,990,972,958,945,930,912,900,885,872,863,853,840,827,818,805,795,782,755,723,688,0,0,0,0,0,0,480,462,435,413,395,395,395,395,395,395,395,408,432,458,480,508,530,553,0,0,0,
              0,0,0,0,0,0,0,0,0,0,393,393,393,393,393,393,393,393,393,393,393,393,393,393,393,393,393,393,393,393,393,393,393,405,448,485,520,0,0,0,0,0,680,680,0,0,0,0,908,948];
  var T = $('ind1Bars');
  teal.forEach(function (v, i) {
    if (!v) return;
    var a = 620 + v / 3;
    el(T, 'rect', { x: X(i) - 2, y: Math.min(a, 840), width: 4, height: Math.abs(a - 840), 'class': 'teal' });
  });
  var bars = [553,575,607,598,562,517,512,544,521,467,494,602,715,755,755,728,707,715,715,625,485,364,301,283,296,332,413,517,625,728,800,832,832,872,985,1057,1066,1080,1062,1007,958,894,828,746,678,616,562,517,481,481,490,499,
              476,445,393,393,393,393,393,393,430,575,680,750,787,823,836,810,727,680,656,638,665,742,836,930,1012,1110,1192,1210,1147,1040,980,921,832,700,570,476,436,393,393,393,408,590,760,867,920,916,880,814];
  var colours = 'ryyrrrryrryybbgggbbrrrrryyyyy' + 'bbbbbbbbb' + 'ggggggg' + 'rrrr' + 'yyy' + 'rrrrrr' + 'yyyy' + 'bbbbb' + 'ggg' + 'rr' + 'bbbbbbbb' + 'gggggg' + 'rrrrrr' + 'yy' + 'bbb' + 'ggg';
  bars.forEach(function (v, i) {
    var a = 620 + v / 3;
    var y = v < 660 ? a : 840, h = Math.abs(a - 840);
    el(T, 'rect', { x: X(i) - 6.5, y: y, width: 13, height: h, 'class': 'hb-' + colours.charAt(i) });
  });
  var G = $('ind1Lines');
  line(G, 'l-white', [[15,735],[45,735],[75,742],[100,733],[130,705],[165,665],[195,650],[230,650],[255,625],[290,575],[315,570],[345,605],[375,660],[410,685],[440,692],[470,690],[500,684],[530,695],[558,698],[590,650],[620,565],[650,480],[680,420],[710,380],[740,340],[770,320],[800,323],[830,345],[860,385],[890,430],[925,482],[960,508],[985,520],[1015,565],[1045,650],[1075,730],[1105,790],[1135,840],[1165,875],[1195,892],[1225,910],[1255,915],[1285,910],[1320,880],[1350,855],[1385,825],[1420,780],[1465,733],[1495,715],[1530,703],[1568,675]], z9,
    [[0,672],[40,615],[70,540],[100,470],[130,380],[160,300],[200,260],[250,300],[320,395],[360,440],[405,480],[430,487],[460,465],[490,440],[545,433],[580,440],[620,510],[660,610],[690,700],[720,810],[750,900],[780,960],[800,980],[830,983],[860,1000],[885,1013],[910,997],[940,950],[990,840],[1050,750],[1085,670],[1110,622],[1135,640],[1165,705],[1200,800],[1250,910],[1280,932],[1305,938],[1330,930]], z10);
  line(G, 'l-yellow', [[15,790],[45,775],[100,765],[150,745],[195,720],[240,700],[300,660],[350,638],[410,635],[470,650],[530,667],[590,678],[640,655],[700,585],[760,490],[815,430],[865,403],[910,402],[960,420],[1020,465],[1070,530],[1120,610],[1170,690],[1220,765],[1270,820],[1320,850],[1385,856],[1430,843],[1500,805],[1568,762]], z9,
    [[0,757],[40,725],[85,670],[130,590],[180,510],[245,395],[300,355],[350,365],[405,395],[440,420],[490,438],[580,442],[630,458],[680,510],[720,575],[760,650],[800,740],[850,840],[900,905],[950,932],[1000,925],[1050,885],[1130,775],[1170,745],[1210,748],[1270,795],[1330,850]], z10);
  var A1 = $('ind1Axis');
  axis(A1, 622, 1029, [['20.00',679],['10.00',760],['5.00',803],['0.00',840],['-5.00',882],['-10.00',921]]);
  el(A1, 'path', { d: 'M1711 712 H1787 M1711 736 H1787', 'class': 'axisv' });
  [[654,1],[774,1],[884,0],[986,0]].forEach(function (a) { arrow(A1, a[0], 635, a[1]); });

  /* ---------- AD / AZ indicator ---------- */
  [1081, 1152].forEach(function (y) { el($('ind2Grid'), 'path', { d: 'M0 ' + y + ' H1711', 'class': 'grid' }); });
  var H = $('ind2Lines');
  el(H, 'path', { d: 'M8 1152 H1650', 'class': 'l l-zero' });
  line(H, 'l-ad', [[8,330],[22,368],[36,350],[50,350],[65,325],[80,345],[94,372],[108,382],[122,350],[137,315],[150,322],[165,358],[180,372],[195,350],[210,335],[225,338],[240,362],[254,375],[268,372],[282,310],[297,253],[312,280],[326,310],[340,340],[355,300],[370,330],[383,350],[397,392],[430,392],[445,350],[458,328],[472,303],[486,340],[500,372],[515,372],[530,372],[550,372],[555,367],[587,367],[602,392],[620,392],[633,350],[648,350],[662,335],[676,355],[690,335],[705,345],[719,372],[733,382],[748,368],[763,350],[778,362],[792,330],[806,255],[820,255],[836,160],[850,250],[865,250],[880,392],[894,392],[909,260],[922,205],[937,120],[952,245],[966,260],[980,245],[995,130],[1010,188],[1025,150],[1040,146],[1055,146],[1070,280],[1085,318],[1100,318],[1112,318],[1127,392],[1142,345],[1157,303],[1172,303],[1185,290],[1200,338],[1214,285],[1228,290],[1242,245],[1257,295],[1272,310],[1287,355],[1303,285],[1317,245],[1330,245],[1345,320],[1360,392],[1375,367],[1390,367],[1403,367],[1417,392],[1432,392],[1445,370]], z11);
  line(H, 'l-az', [[8,360],[22,423],[36,372],[50,368],[65,328],[80,370],[94,413],[108,423],[122,372],[137,318],[150,345],[165,415],[180,432],[195,390],[210,337],[225,342],[240,380],[254,417],[268,405],[282,320],[297,258],[312,320],[326,350],[340,380],[355,305],[370,370],[383,410],[400,477],[415,468],[428,455],[440,410],[458,335],[472,305],[486,365],[500,412],[515,412],[530,412],[545,422],[565,422],[585,413],[603,458],[617,458],[633,392],[648,390],[662,358],[676,382],[690,337],[705,355],[719,403],[733,413],[748,388],[763,350],[778,378],[792,340],[806,265],[820,258],[836,165],[850,410],[865,520],[880,775],[894,690],[909,400],[922,260],[937,125],[952,293],[966,315],[980,300],[995,135],[1010,340],[1025,298],[1040,295],[1055,230],[1070,435],[1085,477],[1112,425],[1127,552],[1142,440],[1157,355],[1172,352],[1185,345],[1200,465],[1214,362],[1228,370],[1242,248],[1257,335],[1272,350],[1287,430],[1303,315],[1317,282],[1330,305],[1345,430],[1360,520],[1375,435],[1390,430],[1403,426],[1417,485],[1432,485],[1445,437]], z11);
  var A2 = $('ind2Axis');
  axis(A2, 1031, 1281, [['10000',1081],['0',1152]]);
  [[234,1],[382,1]].forEach(function (a) { arrow(A2, a[0], 1043, a[1]); });
})();
```
